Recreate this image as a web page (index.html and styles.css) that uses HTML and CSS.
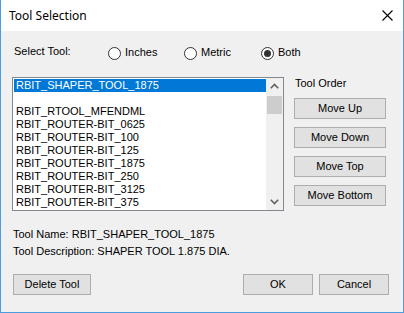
FILE: index.html
```html
<!DOCTYPE html>
<html>
<head>
<meta charset="utf-8">
<link rel="stylesheet" href="styles.css">
</head>
<body>
<div class="window">
  <div class="titlebar">
    <span class="title">Tool Selection</span>
    <svg class="close" width="11" height="11" viewBox="0 0 11 11"><path d="M0.5 0.5 L10.5 10.5 M10.5 0.5 L0.5 10.5" stroke="#000" stroke-width="1.1" fill="none"/></svg>
  </div>
  <div class="body">
    <div class="select-row">
      <span class="select-label">Select Tool:</span>
      <label class="radio"><span class="circle"></span>Inches</label>
      <label class="radio"><span class="circle"></span>Metric</label>
      <label class="radio"><span class="circle checked"></span>Both</label>
    </div>
    <div class="main">
      <div class="listbox">
        <div class="items">
          <div class="item selected">RBIT_SHAPER_TOOL_1875</div>
          <div class="item"></div>
          <div class="item">RBIT_RTOOL_MFENDML</div>
          <div class="item">RBIT_ROUTER-BIT_0625</div>
          <div class="item">RBIT_ROUTER-BIT_100</div>
          <div class="item">RBIT_ROUTER-BIT_125</div>
          <div class="item">RBIT_ROUTER-BIT_1875</div>
          <div class="item">RBIT_ROUTER-BIT_250</div>
          <div class="item">RBIT_ROUTER-BIT_3125</div>
          <div class="item">RBIT_ROUTER-BIT_375</div>
        </div>
        <div class="scrollbar">
          <div class="arrow"><svg width="17" height="17" viewBox="0 0 17 17"><polyline points="4.8,10.2 8.5,6.5 12.2,10.2" fill="none" stroke="#606060" stroke-width="1.6"/></svg></div>
          <div class="track"><div class="thumb"></div></div>
          <div class="arrow"><svg width="17" height="17" viewBox="0 0 17 17"><polyline points="4.8,6.8 8.5,10.5 12.2,6.8" fill="none" stroke="#606060" stroke-width="1.6"/></svg></div>
        </div>
      </div>
      <div class="order">
        <div class="order-label">Tool Order</div>
        <button class="btn order-btn">Move Up</button>
        <button class="btn order-btn">Move Down</button>
        <button class="btn order-btn">Move Top</button>
        <button class="btn order-btn">Move Bottom</button>
      </div>
    </div>
    <div class="info">
      <div class="info-line">Tool Name: RBIT_SHAPER_TOOL_1875</div>
      <div class="info-line">Tool Description: SHAPER TOOL 1.875 DIA.</div>
    </div>
    <div class="footer">
      <button class="btn delete-btn">Delete Tool</button>
      <div class="spacer"></div>
      <button class="btn dlg-btn">OK</button>
      <button class="btn dlg-btn">Cancel</button>
    </div>
  </div>
</div>
</body>
</html>
```
FILE: styles.css
```css
* { box-sizing: border-box; }
html, body { margin: 0; padding: 0; }
body {
  font-family: "Liberation Sans", Arial, sans-serif;
  font-size: 11px;
  color: #000;
  background: #f0f0f0;
}
.window {
  width: 404px;
  height: 313px;
  background: #f0f0f0;
  border-left: 1px solid #4a9ee0;
  border-right: 1px solid #4a9ee0;
  border-bottom: 1px solid #4a9ee0;
  display: flex;
  flex-direction: column;
}
.titlebar {
  height: 31px;
  background: #fff;
  display: flex;
  align-items: center;
  padding-left: 8px;
  padding-right: 10px;
  flex-shrink: 0;
}
.title {
  font-family: "Noto Sans", "Open Sans", sans-serif;
  font-size: 12px;
  flex: 1;
  margin-top: -1px;
}
.close { display: block; margin-top: -1px; }
.body {
  flex: 1;
  padding-left: 11px;
  padding-right: 14px;
  display: flex;
  flex-direction: column;
}
.select-row {
  margin-top: 14px;
  height: 13px;
  line-height: 13px;
  display: grid;
  grid-template-columns: 94px 76px 77px auto;
  align-items: start;
  padding-left: 2px;
}
.radio {
  display: flex;
  align-items: center;
  gap: 4px;
  margin-top: 1px;
  height: 13px;
}
.circle {
  width: 13px;
  height: 13px;
  border-radius: 50%;
  border: 1px solid #333;
  background: #fff;
  display: flex;
  align-items: center;
  justify-content: center;
  margin-top: 1px;
  flex-shrink: 0;
}
.circle.checked::after {
  content: "";
  width: 7px;
  height: 7px;
  border-radius: 50%;
  background: #333;
}
.main {
  margin-top: 19px;
  height: 134px;
  display: flex;
  gap: 10px;
}
.listbox {
  width: 272px;
  height: 134px;
  border: 1px solid #828790;
  background: #fff;
  display: flex;
  padding: 1px 0 0 1px;
}
.items { width: 252px; }
.item {
  height: 13px;
  line-height: 13px;
  padding-left: 2px;
  white-space: nowrap;
}
.item.selected { background: #0078d7; color: #fff; }
.scrollbar {
  width: 17px;
  margin-top: -1px;
  height: 132px;
  background: #f0f0f0;
  display: flex;
  flex-direction: column;
}
.arrow { height: 17px; }
.arrow svg { display: block; }
.track { flex: 1; padding: 1px 1px 0 1px; }
.thumb { height: 18px; background: #cdcdcd; }
.order {
  display: flex;
  flex-direction: column;
  align-items: flex-start;
  gap: 8px;
}
.order-label { line-height: 13px; height: 13px; margin-left: 1px; }
.btn {
  font-family: "Liberation Sans", Arial, sans-serif;
  font-size: 11px;
  color: #000;
  background: #e1e1e1;
  border: 1px solid #adadad;
  height: 21px;
  padding: 0;
  line-height: 19px;
}
.order-btn { width: 92px; }
.info {
  margin-top: 17px;
  padding-left: 1px;
  display: flex;
  flex-direction: column;
  gap: 4px;
}
.info-line { line-height: 13px; height: 13px; }
.footer {
  margin-top: 16px;
  display: flex;
  gap: 6px;
}
.delete-btn { width: 78px; margin-left: 1px; }
.spacer { flex: 1; }
.dlg-btn { width: 70px; }
```
